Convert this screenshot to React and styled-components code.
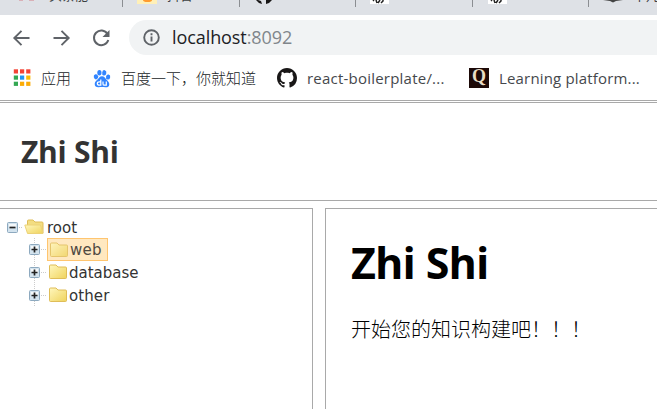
import React from "react";
import styled, { createGlobalStyle } from "styled-components";

const Global = createGlobalStyle`
  *, *::before, *::after { box-sizing: border-box; }
  html, body { margin: 0; overflow: hidden; background: #fff; }
  svg { display: block; flex: none; }
`;

const ui = `"Open Sans", "Noto Sans CJK SC", sans-serif`;

const Window = styled.div`
  width: 657px;
  height: 409px;
  overflow: hidden;
  display: flex;
  flex-direction: column;
  font-family: ${ui};
`;

const TabStrip = styled.div`
  flex: none;
  height: 15px;
  display: flex;
  background: #dee1e6;
  overflow: hidden;
`;

const Tab = styled.div`
  flex: none;
  width: ${(p) => p.$width}px;
  height: 7px;
  padding-left: ${(p) => p.$pad}px;
  display: flex;
  gap: 10px;
  border-right: 1px solid #8b8e92;
  overflow: hidden;
`;

const TabTitle = styled.span`
  font-size: 13px;
  line-height: 14px;
  height: 14px;
  margin-top: -12px;
  color: #3c4043;
  white-space: nowrap;
`;

const Toolbar = styled.div`
  flex: none;
  height: 45px;
  padding: 5px 0 5px 11px;
  display: flex;
  align-items: center;
`;

const NavButton = styled.span`
  width: 20px;
  height: 20px;
  margin-right: 20px;
  display: grid;
  place-items: center;
`;

const AddressBar = styled.div`
  flex: 1;
  height: 35px;
  margin-left: -2px;
  padding-left: 14px;
  display: flex;
  align-items: center;
  gap: 12px;
  background: #f1f3f4;
  border-radius: 18px 0 0 18px;
`;

const Url = styled.span`
  font-size: 18px;
  line-height: 24px;
  margin-bottom: 2px;
  letter-spacing: -0.08px;
  color: #202124;
  span { color: #80868b; }
`;

const Bookmarks = styled.div`
  flex: none;
  height: 40px;
  padding: 0 0 4px 12px;
  display: flex;
  align-items: center;
`;

const Bookmark = styled.span`
  flex: none;
  width: ${(p) => p.$width}px;
  display: flex;
  align-items: center;
  gap: ${(p) => p.$gap}px;
  font-size: 15px;
  line-height: 20px;
  font-weight: ${(p) => p.$weight || 400};
  letter-spacing: ${(p) => p.$track || 0}px;
  color: ${(p) => (p.$weight ? "#202326" : "#45484c")};
  white-space: nowrap;
`;

const QuoteIcon = styled.span`
  width: 20px;
  height: 20px;
  background: #1d0a08;
  color: #e9dcc4;
  font: bold 18px/17px "Liberation Serif", serif;
  letter-spacing: 0;
  text-align: center;
`;

const Page = styled.main`
  flex: 1;
  min-height: 0;
  display: flex;
  flex-direction: column;
  gap: 7px;
  border-top: 1px solid #a9a9a9;
  padding-top: 1px;
`;

const Header = styled.header`
  flex: none;
  height: 99px;
  padding: 29px 0 0 21px;
  border: solid #a9a9a9;
  border-width: 1px 0;
  color: #333;
  font: bold 30px/40px "Trebuchet MS", "Open Sans", sans-serif;
  letter-spacing: -0.25px;
`;

const Frames = styled.div`
  flex: 1;
  min-height: 0;
  display: flex;
  gap: 12px;
`;

const TreePanel = styled.nav`
  width: 313px;
  border: solid #a9a9a9;
  border-width: 1px 1px 0 0;
  padding: 7px 0 0 6px;
`;

const Content = styled.article`
  flex: 1;
  border: solid #a9a9a9;
  border-width: 1px 0 0 1px;
  padding: 24px 0 0 25px;
  color: #000;
`;

const Title = styled.h1`
  margin: 0;
  font: bold 43px/60px "Noto Sans", sans-serif;
  letter-spacing: -0.55px;
`;

const Intro = styled.p`
  margin: 22px 0 0;
  font: 300 20px/28px "Noto Sans CJK SC", sans-serif;
`;

const TreeRow = styled.div`
  height: ${(p) => p.$height}px;
  padding-left: ${(p) => p.$depth * 22}px;
  display: flex;
  align-items: center;
`;

const Node = styled.span`
  height: 23px;
  width: ${(p) => (p.$selected ? "61px" : "auto")};
  padding-left: ${(p) => (p.$selected ? 1 : 0)}px;
  display: flex;
  align-items: center;
  gap: 1px;
  border: 1px solid ${(p) => (p.$selected ? "#ffc56f" : "transparent")};
  background: ${(p) => (p.$selected ? "#ffe8c0" : "transparent")};
  color: ${(p) => (p.$selected ? "#4e4a42" : "#333")};
  font: 15px/21px "DejaVu Sans", sans-serif;
  letter-spacing: ${(p) => p.$track || 0}px;
  svg { opacity: ${(p) => (p.$selected ? 0.8 : 1)}; }
`;

const Label = styled.span`
  padding-top: 2px;
`;

const Toggle = ({ open, root }) => (
  <svg width={root ? 17 : 19} height="23" viewBox={root ? "0 0 17 23" : "0 0 19 23"}>
    {!root && <path d="M6.5 0v6M6.5 17v6" stroke="#ccc" strokeDasharray="1 1" />}
    <path d="M13 11.5h6" stroke="#ccc" strokeDasharray="1 1" />
    <rect x="1.5" y="6.5" width="10" height="10" rx="1" fill="#d3e3ee" stroke="#8da9bf" />
    <path d="M3 8h7v3H3z" fill="#f4f8fa" />
    <path d={open ? "M3.5 11.5h6" : "M3.5 11.5h6M6.5 8.5v6"} stroke="#222" strokeWidth="1.7" />
  </svg>
);

const Folder = ({ open }) => (
  <svg width={open ? 22 : 20} height="20" viewBox={open ? "0 0 22 20" : "0 0 20 20"}>
    <defs>
      <linearGradient id="folderFace" x2="1" y2="1">
        <stop stopColor="#fff7bd" />
        <stop offset="1" stopColor="#efd35d" />
      </linearGradient>
    </defs>
    {open ? (
      <>
        <path d="M3.5 15.5V4q0-1 1-1H9l2 2h7q1 0 1 1v10H4.500z" fill="#f3dd81" stroke="#dfbd58" />
        <path d="M.8 8h14.700q1 0 1.300 1l2.200 7.500H3.500z" fill="url(#folderFace)" stroke="#ecd277" />
      </>
    ) : (
      <path d="M1.5 15.5V4q0-1 1-1H8l2 2h7.5q1 0 1 1v9.500q0 1-1 1h-15q-1 0-1-1z" fill="url(#folderFace)" stroke="#dfbd58" />
    )}
  </svg>
);

const Octocat = () => (
  <svg width="20" height="20" viewBox="0 0 16 16" fill="#191717">
    <path d="M8 0C3.58 0 0 3.58 0 8c0 3.54 2.29 6.53 5.47 7.59.4.07.55-.17.55-.38 0-.19-.01-.82-.01-1.49-2.01.37-2.53-.49-2.69-.94-.09-.23-.48-.94-.82-1.13-.28-.15-.68-.52-.01-.53.63-.01 1.08.58 1.23.82.72 1.21 1.87.87 2.33.66.07-.52.28-.87.51-1.07-1.78-.2-3.64-.89-3.64-3.95 0-.87.31-1.59.82-2.15-.08-.2-.36-1.02.08-2.12 0 0 .67-.21 2.2.82.64-.18 1.32-.27 2-.27s1.36.09 2 .27c1.53-1.04 2.2-.82 2.2-.82.44 1.1.16 1.92.08 2.12.51.56.82 1.27.82 2.15 0 3.07-1.87 3.75-3.65 3.95.29.25.54.73.54 1.48 0 1.07-.01 1.93-.01 2.2 0 .21.15.46.55.38A8.01 8.01 0 0 0 16 8c0-4.42-3.58-8-8-8z" />
  </svg>
);

const Paw = () => (
  <svg width="18" height="20" viewBox="0 0 18 20" fill="#3285ff">
    <ellipse cx="2.8" cy="8.8" rx="2.2" ry="2.6" transform="rotate(-12 2.8 8)" />
    <ellipse cx="6.4" cy="4.8" rx="2.1" ry="2.7" />
    <ellipse cx="11.4" cy="4.8" rx="2.1" ry="2.7" transform="rotate(10 11.4 4)" />
    <ellipse cx="15.2" cy="9" rx="2.1" ry="2.6" transform="rotate(12 15.2 8.5)" />
    <path d="M9 8.2c2.2 0 3 1.8 4.3 3.2 1.4 1.5 3.2 2.7 3 5-.2 2.6-2.2 3-4 2.8-1.8-.2-4.8-.2-6.6 0-2.2.2-4-.8-4-3.2 0-2.2 1.7-3.3 3.1-4.7C6 10 6.7 8.2 9 8.2z" />
    <path d="M7.8 11.5v5.7H6.3q-2 0-2-1.7t2-1.7h1.5M10 13.6v2.3q0 1.3 1.3 1.3h2v-3.6" fill="none" stroke="#fff" strokeWidth="1.2" />
  </svg>
);

const appColors = ["#f44336", "#f44336", "#f44336", "#34a853", "#2196f3", "#fbbc05", "#34a853", "#fbab05", "#fbab05"];
const AppsGrid = () => (
  <svg width="20" height="20" viewBox="0 0 20 20">
    {appColors.map((c, i) => (
      <rect key={i} x={1.8 + (i % 3) * 6.2} y={1.3 + Math.floor(i / 3) * 6.2} width="4.2" height="4.2" fill={c} />
    ))}
  </svg>
);

const NavIcon = ({ d }) => (
  <svg width="20" height="20" viewBox="0 0 20 20" fill="none" stroke="#5f6368" strokeWidth="1.9">
    <path d={d} />
  </svg>
);

const PixelMark = () => (
  <svg width="19" height="4" viewBox="0 0 19 4">
    <path d="M0 0h19v4H0z" fill="#fff" />
    <path d="M3 0l1 1M6 0l1 3M10 0l-2 3M13 0v1l-2 2" stroke="#222" strokeWidth="1.5" fill="none" />
  </svg>
);

const nodes = [
  { name: "web", selected: true, track: 0.3, height: 23 },
  { name: "database", track: 0, height: 22 },
  { name: "other", track: 0.1, height: 24 },
];

export default function App() {
  return (
    <Window>
      <Global />
      <TabStrip>
        <Tab $width={123} $pad={18}>
          <svg width="21" height="2"><path d="M1 0h4M11 0h5" stroke="#d8a0a8" strokeWidth="1.5" /></svg>
          <TabTitle>头条能</TabTitle>
        </Tab>
        <Tab $width={117} $pad={14}>
          <svg width="20" height="4">
            <path d="M0 0h20v4H0z" fill="#fff0b8" />
            <ellipse cx="10.5" cy="0" rx="4.5" ry="2" fill="#ff9b2e" />
          </svg>
          <TabTitle>抖音</TabTitle>
        </Tab>
        <Tab $width={116} $pad={15}>
          <svg width="20" height="4" viewBox="0 16 20 4">
            <path d="M1 16h2l3 1 1 3q-4-1-6-4zM11 16h6q-2 3-6 4z" fill="#191717" />
          </svg>
        </Tab>
        <Tab $width={117} $pad={14}><PixelMark /></Tab>
        <Tab $width={116} $pad={15}><PixelMark /></Tab>
        <Tab $width={90} $pad={14}>
          <svg width="20" height="3"><path d="M0 0h20l-7 1-3 1.5L7 1z" fill="#444" /></svg>
          <TabTitle>平凡</TabTitle>
        </Tab>
      </TabStrip>

      <Toolbar>
        <NavButton><NavIcon d="M18.5 10H3.5M10.5 2.8L3.3 10l7.2 7.2" /></NavButton>
        <NavButton><NavIcon d="M2.5 10H17M10.5 2.8L17.7 10l-7.2 7.2" /></NavButton>
        <NavButton>
          <svg width="20" height="20" viewBox="0 0 20 20" fill="none">
            <path d="M16.5 6A7.3 7.3 0 1 0 17.3 12" stroke="#5f6368" strokeWidth="2" />
            <path d="M18.5 2v7h-7z" fill="#5f6368" />
          </svg>
        </NavButton>
        <AddressBar>
          <svg width="17" height="17" viewBox="0 0 17 17" fill="none" stroke="#5f6368" strokeWidth="1.9">
            <circle cx="8.5" cy="8.5" r="7.3" />
            <path d="M8.5 7.5v5M8.5 4.3v1.9" />
          </svg>
          <Url>localhost<span>:8092</span></Url>
        </AddressBar>
      </Toolbar>

      <Bookmarks>
        <Bookmark $width={81} $gap={9} $weight={300}><AppsGrid />应用</Bookmark>
        <Bookmark $width={184} $gap={10} $weight={300}><Paw />百度一下，你就知道</Bookmark>
        <Bookmark $width={192} $gap={10} $track={0.22}><Octocat />react-boilerplate/...</Bookmark>
        <Bookmark $width={188} $gap={10} $track={0.17}><QuoteIcon>Q</QuoteIcon>Learning platform...</Bookmark>
      </Bookmarks>

      <Page>
        <Header>Zhi Shi</Header>
        <Frames>
          <TreePanel>
            <TreeRow $depth={0} $height={22}>
              <Toggle open root />
              <Node><Folder open /><Label>root</Label></Node>
            </TreeRow>
            {nodes.map((n) => (
              <TreeRow key={n.name} $depth={1} $height={n.height}>
                <Toggle />
                <Node $selected={n.selected} $track={n.track}>
                  <Folder />
                  <Label>{n.name}</Label>
                </Node>
              </TreeRow>
            ))}
          </TreePanel>
          <Content>
            <Title>Zhi Shi</Title>
            <Intro>开始您的知识构建吧！！！</Intro>
          </Content>
        </Frames>
      </Page>
    </Window>
  );
}
